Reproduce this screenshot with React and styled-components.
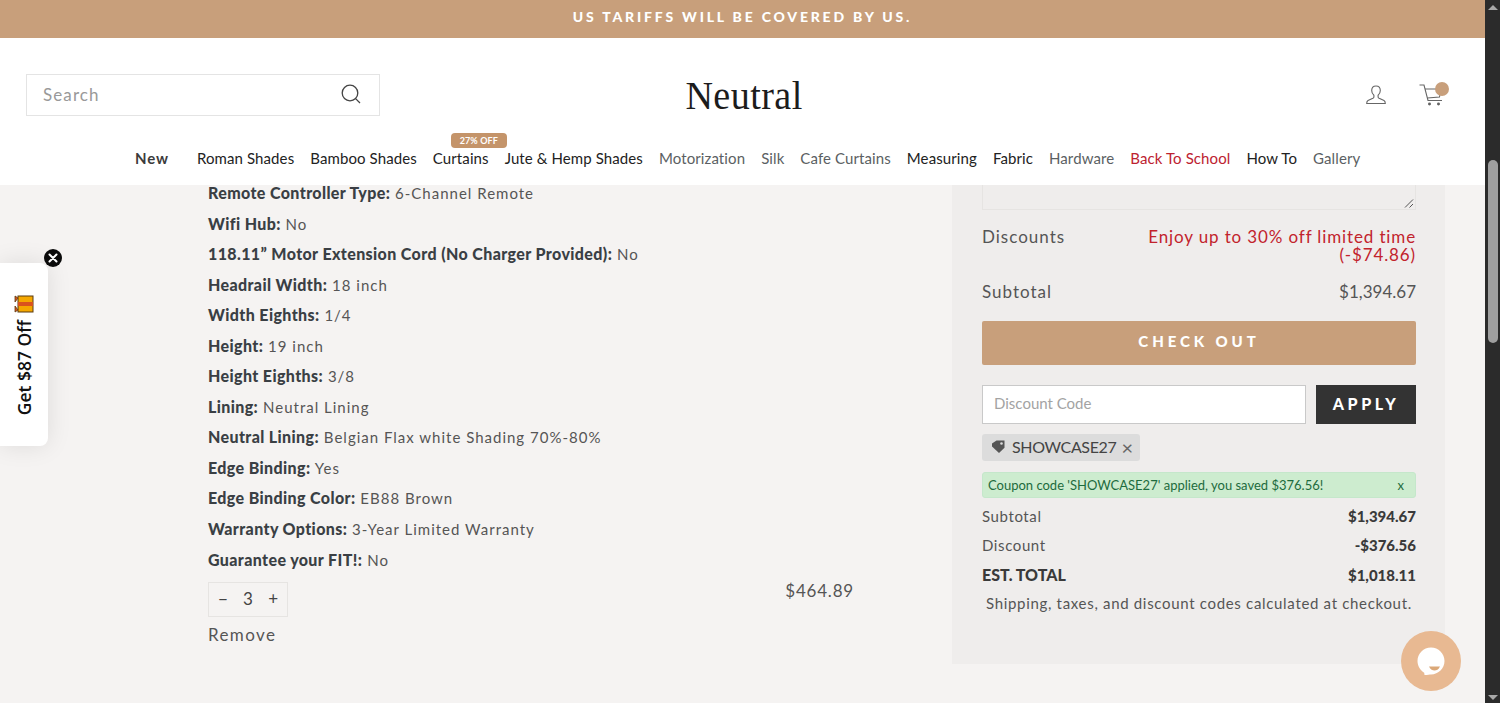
import styled, { createGlobalStyle } from 'styled-components';

const GlobalStyle = createGlobalStyle`
  html, body {
    margin: 0;
    padding: 0;
    height: 703px;
    overflow: hidden;
    background: #f5f3f2;
    font-family: Lato, "Liberation Sans", sans-serif;
    color: #444;
  }
  * { box-sizing: border-box; }
`;

const Window = styled.div`
  display: flex;
  width: 1500px;
  height: 703px;
  overflow: hidden;
  position: relative;
`;
const Page = styled.div`
  width: 1485px;
  display: flex;
  flex-direction: column;
`;
const Announcement = styled.div`
  height: 38px;
  background: #c89f7b;
  color: #fff;
  display: flex;
  align-items: center;
  justify-content: center;
  font-size: 14px;
  font-weight: 900;
  letter-spacing: 2.8px;
  padding-bottom: 5px;
`;
const Header = styled.header`
  background: #fff;
  height: 147px;
  display: flex;
  flex-direction: column;
`;
const TopRow = styled.div`
  display: grid;
  grid-template-columns: 1fr auto 1fr;
  align-items: center;
  padding: 36px 40px 0 26px;
`;
const SearchBox = styled.div`
  width: 354px;
  height: 42px;
  border: 1px solid #e4e4e4;
  display: flex;
  align-items: center;
  justify-content: space-between;
  padding: 0 18px 2px 16px;
  font-size: 17px;
  letter-spacing: 1.1px;
  color: #999;
`;
const Logo = styled.div`
  font-family: "Liberation Serif", serif;
  font-size: 41px;
  line-height: 42px;
  letter-spacing: 0.45px;
  color: #1c1c1c;
  margin-left: 18px;
  transform: scaleX(0.93);
`;
const Account = styled.div`
  display: flex;
  justify-content: flex-end;
  align-items: center;
  gap: 33px;
`;
const CartWrap = styled.div`
  position: relative;
  width: 26px;
  height: 24px;
`;
const CartDot = styled.span`
  position: absolute;
  top: -1px;
  right: -4px;
  width: 14px;
  height: 14px;
  border-radius: 50%;
  background: #c89f7b;
`;
const Nav = styled.nav`
  display: flex;
  align-items: baseline;
  gap: 16px;
  padding: 33px 0 0 135px;
  font-size: 15px;
  line-height: 18px;
  letter-spacing: 0.1px;
`;
const NavItem = styled.a`
  position: relative;
  white-space: nowrap;
  color: ${(p) => (p.$tone === 'red' ? '#bd2230' : p.$tone === 'gray' ? '#5b5f63' : '#222')};
`;
const NewItem = styled(NavItem)`
  font-weight: 700;
  letter-spacing: 0.9px;
  color: #3b3b3b;
  margin-right: 12px;
`;
const Badge = styled.span`
  position: absolute;
  top: -16px;
  left: 18px;
  width: 56px;
  height: 15px;
  border-radius: 4px;
  background: #c4946a;
  color: #fff;
  font-size: 9px;
  line-height: 15px;
  font-weight: 700;
  text-align: center;
`;
const Main = styled.main`
  flex: 1;
  display: flex;
  align-items: flex-start;
  padding-left: 208px;
  min-height: 0;
`;
const ProductCol = styled.div`
  width: 646px;
  margin-right: 98px;
  flex: none;
`;
const OptionList = styled.ul`
  list-style: none;
  margin: 0;
  padding: 0;
  display: flex;
  flex-direction: column;
  gap: 14.55px;
  font-size: 15px;
  line-height: 16px;
  letter-spacing: 1px;
  color: #555;
`;
const OptionName = styled.strong`
  font-size: 16px;
  font-weight: 900;
  letter-spacing: 0.38px;
  color: #3a3f44;
`;
const QtyRow = styled.div`
  display: flex;
  align-items: flex-start;
  justify-content: space-between;
  margin-top: 14px;
`;
const QtyBox = styled.div`
  width: 80px;
  height: 35px;
  border: 1px solid #e6e4e2;
  display: flex;
  align-items: center;
  justify-content: space-between;
  padding: 0 9px 2px;
  font-size: 17px;
  color: #444;
`;
const Price = styled.div`
  font-size: 17px;
  line-height: 17px;
  letter-spacing: 0.8px;
  color: #555;
`;
const Remove = styled.div`
  margin-top: 7px;
  font-size: 17px;
  letter-spacing: 1.4px;
  color: #555;
`;
const Panel = styled.aside`
  width: 493px;
  height: 479px;
  flex: none;
  background: #efedec;
  padding: 0 29px 0 30px;
  display: flex;
  flex-direction: column;
`;
const NoteArea = styled.div`
  position: relative;
  height: 25px;
  border: 1px solid #e6e4e2;
  border-top: none;
`;
const ResizeGrip = styled.svg`
  position: absolute;
  right: 1px;
  bottom: 1px;
`;
const SummaryRow = styled.div`
  display: flex;
  justify-content: space-between;
  align-items: flex-start;
  font-size: 17px;
  line-height: 18px;
  letter-spacing: 1px;
  color: #555;
  margin-top: ${(p) => p.$top}px;
`;
const Promo = styled.div`
  color: #c2232c;
  text-align: right;
  letter-spacing: 0.87px;
`;
const SummaryValue = styled.span`
  letter-spacing: 0;
`;
const CheckoutButton = styled.button`
  margin-top: 20px;
  height: 44px;
  border: none;
  border-radius: 2px;
  background: #c89f7b;
  color: #fff;
  font-family: inherit;
  font-size: 15px;
  font-weight: 900;
  letter-spacing: 3.9px;
  padding: 0 0 5px;
`;
const CodeRow = styled.div`
  display: flex;
  justify-content: space-between;
  margin-top: 20px;
`;
const CodeInput = styled.div`
  width: 324px;
  height: 39px;
  border: 1px solid #c9c9c9;
  background: #fff;
  color: #a3a3a3;
  font-size: 15px;
  line-height: 35px;
  padding-left: 11px;
`;
const ApplyButton = styled.button`
  width: 100px;
  height: 39px;
  border: none;
  background: #333;
  color: #fff;
  font-family: inherit;
  font-size: 16px;
  font-weight: 900;
  letter-spacing: 3.6px;
  padding: 0 0 2px;
`;
const Chip = styled.div`
  align-self: flex-start;
  margin-top: 10px;
  width: 158px;
  height: 27px;
  background: #dcdcdc;
  border-radius: 3px;
  display: flex;
  align-items: center;
  gap: 6px;
  padding: 0 0 2px 9px;
  font-size: 16px;
  letter-spacing: -0.35px;
  color: #444;
`;
const ChipClose = styled.span`
  margin-left: -1px;
  font-size: 20px;
  line-height: 20px;
  color: #666;
`;
const Notice = styled.div`
  margin-top: 11px;
  height: 26px;
  background: #cdeccf;
  border: 1px solid #c5e7cb;
  border-radius: 3px;
  display: flex;
  align-items: center;
  justify-content: space-between;
  padding: 0 11px 0 5px;
  font-size: 13px;
  color: #1d6b3d;
`;
const TotalRow = styled.div`
  display: flex;
  justify-content: space-between;
  align-items: center;
  height: 29px;
  font-size: 15px;
  letter-spacing: 0.5px;
  color: #555;
`;
const FirstTotalRow = styled(TotalRow)`
  margin-top: 3px;
`;
const GrandTotalRow = styled(TotalRow)`
  margin-top: 1px;
`;
const TotalValue = styled.span`
  font-weight: 900;
  letter-spacing: 0;
  color: #3a3a3a;
`;
const TotalLabel = styled.span`
  font-size: ${(p) => (p.$strong ? '16px' : '15px')};
  font-weight: ${(p) => (p.$strong ? 900 : 400)};
  letter-spacing: ${(p) => (p.$strong ? '0' : '0.6px')};
  color: ${(p) => (p.$strong ? '#3a3a3a' : '#555')};
`;
const Shipping = styled.div`
  margin-top: 5px;
  padding-left: 4px;
  font-size: 15px;
  letter-spacing: 0.68px;
  color: #555;
  white-space: nowrap;
`;
const Scrollbar = styled.div`
  width: 15px;
  height: 703px;
  background: #2b2b2b;
  position: relative;
`;
const ScrollThumb = styled.div`
  position: absolute;
  left: 3px;
  top: 160px;
  width: 10px;
  height: 183px;
  border-radius: 5px;
  background: #9f9f9f;
`;
const ScrollArrow = styled.div`
  position: absolute;
  left: 3px;
  ${(p) => (p.$down ? 'bottom: 3px;' : 'top: 5px;')}
  border-left: 5px solid transparent;
  border-right: 5px solid transparent;
  ${(p) => (p.$down ? 'border-top: 5px solid #a8a8a8;' : 'border-bottom: 5px solid #a8a8a8;')}
`;
const GiftTab = styled.div`
  position: absolute;
  left: 0;
  top: 263px;
  width: 48px;
  height: 183px;
  background: #fff;
  border-radius: 0 8px 8px 0;
  box-shadow: 0 0 24px rgba(0, 0, 0, 0.1);
  display: flex;
  flex-direction: column;
  align-items: center;
  padding-top: 32px;
  gap: 7px;
`;
const GiftText = styled.span`
  writing-mode: vertical-rl;
  transform: rotate(180deg);
  font-family: "Open Sans", sans-serif;
  font-size: 17.5px;
  font-weight: 600;
  color: #111;
  white-space: nowrap;
`;
const GiftClose = styled.div`
  position: absolute;
  left: 44px;
  top: 249px;
  width: 18px;
  height: 18px;
  border-radius: 50%;
  background: #0b0b0b;
  display: flex;
  align-items: center;
  justify-content: center;
`;
const ChatButton = styled.div`
  position: absolute;
  left: 1401px;
  top: 631px;
  width: 60px;
  height: 60px;
  border-radius: 50%;
  background: #e8b992;
  display: flex;
  align-items: center;
  justify-content: center;
`;

const options = [
  ['Remote Controller Type:', '6-Channel Remote'],
  ['Wifi Hub:', 'No'],
  ['118.11” Motor Extension Cord (No Charger Provided):', 'No'],
  ['Headrail Width:', '18 inch'],
  ['Width Eighths:', '1/4'],
  ['Height:', '19 inch'],
  ['Height Eighths:', '3/8'],
  ['Lining:', 'Neutral Lining'],
  ['Neutral Lining:', 'Belgian Flax white Shading 70%-80%'],
  ['Edge Binding:', 'Yes'],
  ['Edge Binding Color:', 'EB88 Brown'],
  ['Warranty Options:', '3-Year Limited Warranty'],
  ['Guarantee your FIT!:', 'No'],
];

const navItems = [
  ['Roman Shades'],
  ['Bamboo Shades'],
  ['Curtains', '', '27% OFF'],
  ['Jute & Hemp Shades'],
  ['Motorization', 'gray'],
  ['Silk', 'gray'],
  ['Cafe Curtains', 'gray'],
  ['Measuring'],
  ['Fabric'],
  ['Hardware', 'gray'],
  ['Back To School', 'red'],
  ['How To'],
  ['Gallery', 'gray'],
];

export default function App() {
  return (
    <Window>
      <GlobalStyle />
      <Page>
        <Announcement>US TARIFFS WILL BE COVERED BY US.</Announcement>
        <Header>
          <TopRow>
            <SearchBox>
              Search
              <svg width="20" height="20" viewBox="0 0 20 20" fill="none" stroke="#444" strokeWidth="1.3">
                <circle cx="9" cy="9" r="7.8" />
                <path d="M14.6 14.6L19 19" />
              </svg>
            </SearchBox>
            <Logo>Neutral</Logo>
            <Account>
              <svg width="20" height="20" viewBox="0 0 20 20" fill="none" stroke="#666" strokeWidth="1.1">
                <path d="M10 1c-2.7 0-4.300 2-4.300 4.600 0 2 .9 3.700 2.200 4.600v1.700c0 .6-.4 1-1 1.300L2 15.400c-.8.4-1.300 1.200-1.300 3.100h18.600c0-1.900-.5-2.700-1.300-3.100l-4.900-2.200c-.6-.3-1-.7-1-1.300v-1.700c1.300-.9 2.200-2.600 2.200-4.600C14.300 3 12.700 1 10 1z" />
              </svg>
              <CartWrap>
                <svg width="26" height="24" viewBox="0 0 26 24" fill="none" stroke="#666" strokeWidth="1.1">
                  <path d="M0.500 2h4.500l4 15.500h14" />
                  <path d="M6 6h16l-1.500 8L8.300 15" />
                  <circle cx="10.500" cy="21" r="0.9" fill="#333" />
                  <circle cx="19.500" cy="21" r="0.9" fill="#333" />
                </svg>
                <CartDot />
              </CartWrap>
            </Account>
          </TopRow>
          <Nav>
            <NewItem>New</NewItem>
            {navItems.map(([label, tone, badge]) => (
              <NavItem key={label} $tone={tone}>
                {badge && <Badge>{badge}</Badge>}
                {label}
              </NavItem>
            ))}
          </Nav>
        </Header>
        <Main>
          <ProductCol>
            <OptionList>
              {options.map(([name, value]) => (
                <li key={name}>
                  <OptionName>{name}</OptionName> {value}
                </li>
              ))}
            </OptionList>
            <QtyRow>
              <QtyBox>
                <span>−</span>
                <span>3</span>
                <span>+</span>
              </QtyBox>
              <Price>$464.89</Price>
            </QtyRow>
            <Remove>Remove</Remove>
          </ProductCol>
          <Panel>
            <NoteArea>
              <ResizeGrip width="10" height="9" viewBox="0 0 10 9" stroke="#555" strokeWidth="1">
                <path d="M1 8.500L9 .5M5.500 8.500L9 5" />
              </ResizeGrip>
            </NoteArea>
            <SummaryRow $top={18}>
              <span>Discounts</span>
              <Promo>
                Enjoy up to 30% off limited time
                <br />
                (-$74.86)
              </Promo>
            </SummaryRow>
            <SummaryRow $top={19}>
              <span>Subtotal</span>
              <SummaryValue>$1,394.67</SummaryValue>
            </SummaryRow>
            <CheckoutButton>CHECK OUT</CheckoutButton>
            <CodeRow>
              <CodeInput>Discount Code</CodeInput>
              <ApplyButton>APPLY</ApplyButton>
            </CodeRow>
            <Chip>
              <svg width="15" height="15" viewBox="0 0 15 15" fill="#555">
                <path d="M1 4.500L5.500 1.500h8v7.300L8 14 1 7.500z" />
                <circle cx="10.500" cy="4.500" r="1.300" fill="#dcdcdc" />
              </svg>
              SHOWCASE27
              <ChipClose>×</ChipClose>
            </Chip>
            <Notice>
              <span>Coupon code 'SHOWCASE27' applied, you saved $376.56!</span>
              <span>x</span>
            </Notice>
            <FirstTotalRow>
              <TotalLabel>Subtotal</TotalLabel>
              <TotalValue>$1,394.67</TotalValue>
            </FirstTotalRow>
            <TotalRow>
              <TotalLabel>Discount</TotalLabel>
              <TotalValue>-$376.56</TotalValue>
            </TotalRow>
            <GrandTotalRow>
              <TotalLabel $strong>EST. TOTAL</TotalLabel>
              <TotalValue>$1,018.11</TotalValue>
            </GrandTotalRow>
            <Shipping>Shipping, taxes, and discount codes calculated at checkout.</Shipping>
          </Panel>
        </Main>
      </Page>
      <Scrollbar>
        <ScrollArrow />
        <ScrollThumb />
        <ScrollArrow $down />
      </Scrollbar>
      <GiftTab>
        <svg width="20" height="18" viewBox="0 0 20 18">
          <rect x="4" y="1" width="15" height="16" fill="#f5a800" stroke="#5a3a10" strokeWidth="1" />
          <rect x="4" y="7" width="15" height="4" fill="#d9531e" />
          <path d="M4 3L1 1v6zM4 15l-3 2v-6z" fill="#d9531e" stroke="#5a3a10" strokeWidth="0.8" />
        </svg>
        <GiftText>Get $87 Off</GiftText>
      </GiftTab>
      <GiftClose>
        <svg width="10" height="10" viewBox="0 0 10 10" stroke="#fff" strokeWidth="2" strokeLinecap="round">
          <path d="M1.500 1.500l7 7M8.500 1.500l-7 7" />
        </svg>
      </GiftClose>
      <ChatButton>
        <svg width="28" height="28" viewBox="0 0 28 28">
          <path d="M14 .5C6.500 .5 .5 6.500 .5 14c0 5 2.700 9.300 6.700 11.700L7.500 28c3-.3 5.500-.6 6.500-.6 7.500 0 13.500-6 13.500-13.400S21.500 .5 14 .5z" fill="#fff" />
          <path d="M12 19.500h11c-1.500 3-3.500 4-5.500 4s-4-1-5.500-4z" fill="#dba878" />
        </svg>
      </ChatButton>
    </Window>
  );
}
